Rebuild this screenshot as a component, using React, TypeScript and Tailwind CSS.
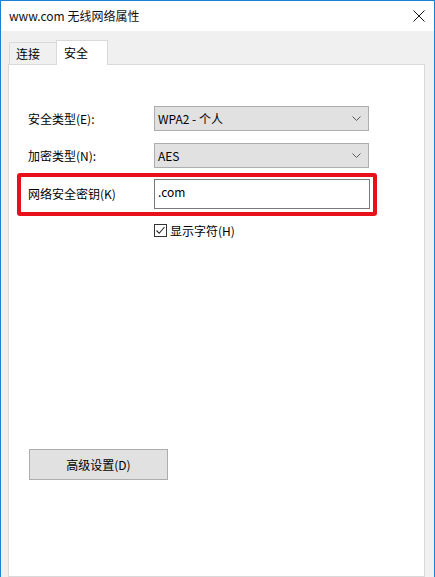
import React from "react";

function Chevron() {
  return (
    <svg width="9" height="5" viewBox="0 0 9 5" className="shrink-0">
      <path d="M0.5 0.5 L4.5 4.5 L8.5 0.5" fill="none" stroke="#5a5a5a" strokeWidth="1" />
    </svg>
  );
}

function Select({ value }: { value: string }) {
  return (
    <div className="w-[215px] h-[25px] bg-[#e1e1e1] border border-[#adadad] flex items-center justify-between pl-[3px] pr-[7px]">
      <span className="text-[12px] leading-none">{value}</span>
      <Chevron />
    </div>
  );
}

export default function App() {
  return (
    <div className="w-[435px] h-[577px] bg-[#f0f0f0] border-x border-t border-[#1a82d6] flex flex-col font-['Noto_Sans_CJK_SC',sans-serif] text-[12px] text-black overflow-hidden">
      <div className="h-[30px] bg-white flex items-center justify-between pl-[8px] pr-[9px] shrink-0">
        <span className="text-[12px] leading-none text-[#111]">www.com 无线网络属性</span>
        <svg width="12" height="12" viewBox="0 0 12 12">
          <path d="M0.5 0.5 L11.5 11.5 M11.5 0.5 L0.5 11.5" stroke="#111" strokeWidth="1" />
        </svg>
      </div>
      <div className="flex-1 flex flex-col pl-[7px] pr-[9px] pt-[9px]">
        <div className="flex items-end h-[24px] pl-[1px] relative z-10">
          <div className="w-[47px] h-[22px] bg-[#f0f0f0] border-l border-t border-[#d9d9d9] flex items-center pl-[6px]">
            <span className="leading-none">连接</span>
          </div>
          <div className="w-[52px] h-[25px] -mb-px bg-white border-l border-t border-r border-[#d9d9d9] flex items-start pt-[6px] pl-[7px]">
            <span className="leading-none">安全</span>
          </div>
        </div>
        <div className="flex-1 bg-white border border-[#d9d9d9] pl-[19px] pt-[41px] flex flex-col">
          <div className="flex items-center">
            <span className="w-[126px] leading-none">安全类型(E):</span>
            <Select value="WPA2 - 个人" />
          </div>
          <div className="flex items-center mt-[12px]">
            <span className="w-[126px] leading-none">加密类型(N):</span>
            <Select value="AES" />
          </div>
          <div className="flex items-center mt-[11px] relative">
            <div className="absolute -left-[11px] -top-[6px] w-[360px] h-[43px] border-[4px] border-[#e8101b] rounded-[3px]" />
            <span className="w-[126px] leading-none">网络安全密钥(K)</span>
            <div className="w-[216px] h-[30px] bg-white border border-[#7a7a7a] flex items-start pl-[3px] pt-[6px]">
              <span className="leading-none">.com</span>
            </div>
          </div>
          <div className="flex items-center mt-[15px] pl-[126px]">
            <div className="w-[13px] h-[13px] border border-[#333] bg-white flex items-center justify-center">
              <svg width="11" height="11" viewBox="0 0 11 11">
                <path d="M1.5 5.5 L4.2 8.3 L9.5 2" fill="none" stroke="#222" strokeWidth="1.1" />
              </svg>
            </div>
            <span className="ml-[3px] leading-none">显示字符(H)</span>
          </div>
          <div className="mt-[212px] ml-[1px] w-[139px] h-[31px] bg-[#e1e1e1] border border-[#adadad] flex items-center justify-center">
            <span className="leading-none">高级设置(D)</span>
          </div>
        </div>
      </div>
    </div>
  );
}
